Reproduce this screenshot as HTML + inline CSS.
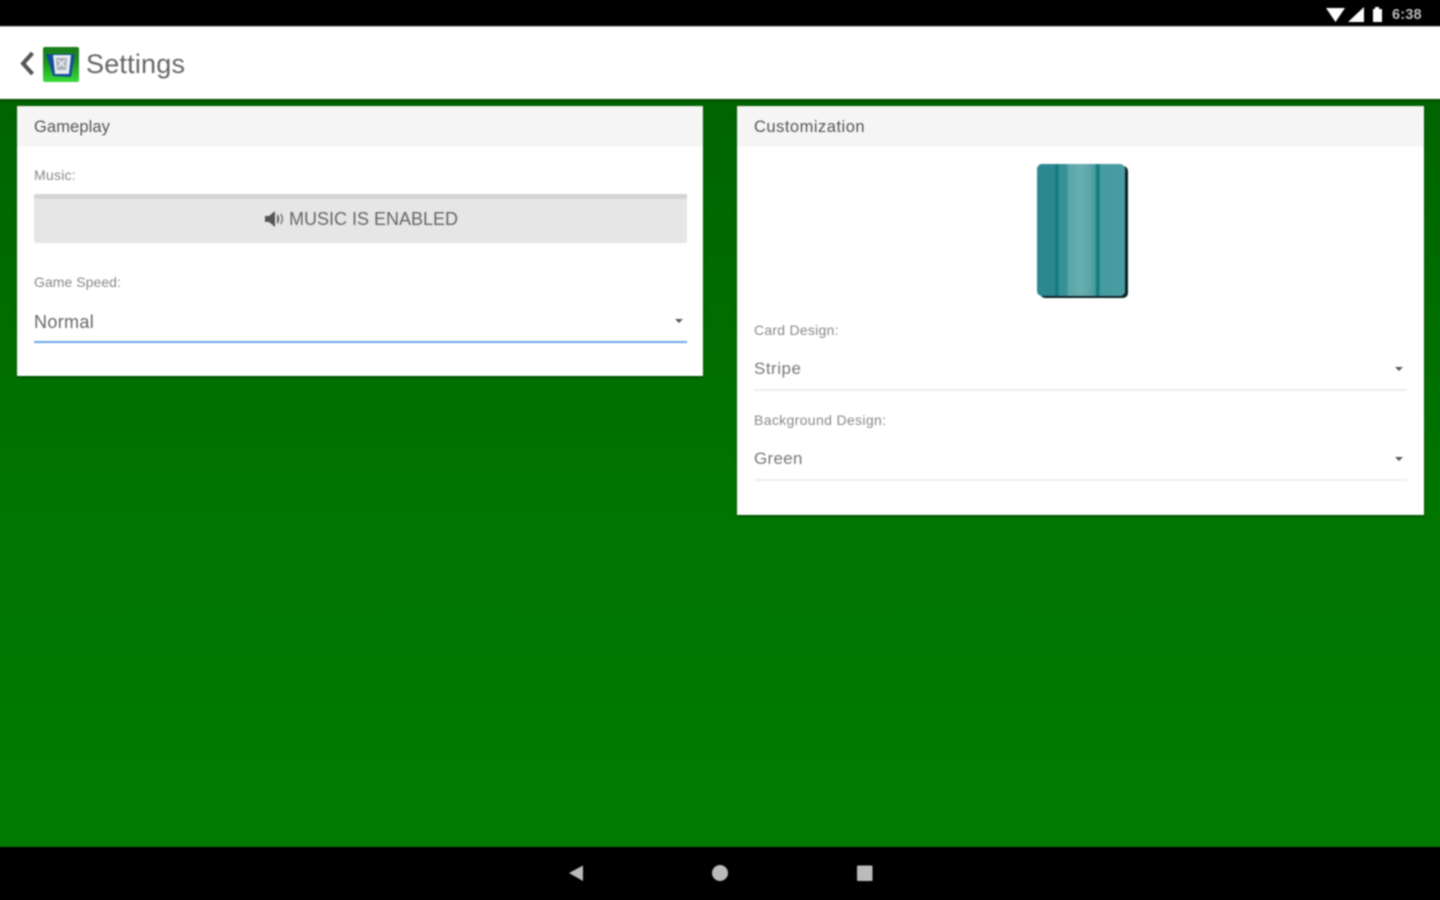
<!DOCTYPE html>
<html>
<head>
<meta charset="utf-8">
<style>
html,body{margin:0;padding:0;width:1440px;height:900px;overflow:hidden;background:#000}
body{font-family:"Liberation Sans",sans-serif;position:relative}
.abs{position:absolute}
#wrap{position:absolute;left:0;top:0;width:1440px;height:900px;filter:blur(.85px)}
.green{left:-10px;top:99px;width:1460px;height:748px;background:linear-gradient(#006400 0,#006c00 200px,#007400 400px,#007b00 748px)}
.top{left:-10px;top:-10px;width:1460px;height:36px;background:#000}
.bot{left:-10px;top:847px;width:1460px;height:63px;background:#000}
.bar{left:-10px;top:26px;width:1460px;height:73px;background:#fff;box-shadow:0 1px 2px rgba(0,0,0,.45);border-top:1px solid #ccc;box-sizing:border-box}
.title{left:86px;top:48px;font-size:27px;line-height:32px;color:#666;letter-spacing:.2px}
.card{background:#fff;box-shadow:0 1px 2px rgba(0,0,0,.5)}
.head{left:0;top:0;right:0;height:40px;background:#f5f5f5;border-bottom:1px solid #f0f0f0;box-sizing:border-box}
.ht{font-size:16.500px;line-height:20px;color:#555;white-space:nowrap;letter-spacing:.35px}
.lb{font-size:14px;line-height:16px;color:#888;white-space:nowrap;letter-spacing:.25px}
.val{font-size:17px;line-height:20px;color:#777;white-space:nowrap;letter-spacing:.2px}
.line{height:2px;background:#eee}
.arrow{width:0;height:0;border-left:4px solid transparent;border-right:4px solid transparent;border-top:4px solid #555}
.btn{left:17px;top:88px;width:653px;height:49px;background:#e6e6e6;border-top:5px solid #d4d4d4;box-sizing:border-box;border-radius:2px}
.cardimg{left:1037px;top:164px;width:88px;height:132px;border-radius:5px;box-shadow:3px 2px 0 #0a2225;background:linear-gradient(90deg,#2b8890 0,#2b8890 20%,#157a80 21%,#157a80 24%,#359097 25%,#359097 33%,#5aa5a8 36%,#68aeb0 50%,#5aa5a8 60%,#459a9f 66%,#137a80 68%,#137a80 70%,#459a9f 72%,#4a9da2 100%)}
</style>
</head>
<body>
<div id="wrap">
<div class="abs top"></div>
<div class="abs green"></div>
<div class="abs bot"></div>
<div class="abs bar"></div>

<svg class="abs" style="left:1320px;top:4px" width="80" height="20" viewBox="0 0 80 20">
<path d="M6 4H25L15.500 18Z" fill="#fff"/>
<path d="M28 18L44 3V18Z" fill="#fff"/>
<path d="M53 5H55V3H59V5H62V18H53Z" fill="#fff"/>
</svg>
<div class="abs" style="left:1392px;top:7px;font-size:14.500px;line-height:16px;color:#bbb;font-weight:bold;letter-spacing:.2px">6:38</div>

<svg class="abs" style="left:18px;top:50px" width="20" height="28" viewBox="0 0 20 28">
<path d="M14.500 3L5 13.500L14.500 24" fill="none" stroke="#555" stroke-width="4"/>
</svg>
<svg class="abs" style="left:43px;top:46px" width="36" height="36" viewBox="0 0 36 36">
<defs><linearGradient id="g" x1="0" y1="0" x2="0" y2="1"><stop offset="0" stop-color="#187a18"/><stop offset=".4" stop-color="#1f8f1f"/><stop offset="1" stop-color="#38dc38"/></linearGradient></defs>
<rect y="1" width="36" height="35" rx="2" fill="url(#g)"/>
<path d="M3 8H32L28 31L10 30Z" fill="#0f4f96"/>
<path d="M10 9H28L26 28H12Z" fill="#e8ebf0"/>
<path d="M13 12H24L23 24H14Z" fill="#a8b0ba"/>
<path d="M15 14L22 21M22 14L15 21" stroke="#eef0f3" stroke-width="1.500"/>
</svg>
<div class="abs title">Settings</div>

<div class="abs card" style="left:17px;top:106px;width:686px;height:270px">
  <div class="abs head"></div>
  <div class="abs ht" style="left:17px;top:11px;letter-spacing:.1px">Gameplay</div>
  <div class="abs lb" style="left:17px;top:61px">Music:</div>
  <div class="abs btn"></div>
  <svg class="abs" style="left:248px;top:105px" width="20" height="16" viewBox="0 0 20 16">
    <path d="M0 5H4L10 0V16L4 11H0Z" fill="#555"/>
    <path d="M12 3C15 5 15 11 12 13Z" fill="#666"/>
    <path d="M15.500 3C18 6 18 10 15.500 13" fill="none" stroke="#777" stroke-width="1.500"/>
  </svg>
  <div class="abs" style="left:272px;top:102px;font-size:18px;line-height:22px;color:#666;white-space:nowrap">MUSIC IS ENABLED</div>
  <div class="abs lb" style="left:17px;top:168px;letter-spacing:.05px">Game Speed:</div>
  <div class="abs val" style="left:17px;top:206px;color:#666;font-size:18px;letter-spacing:.35px">Normal</div>
  <div class="abs arrow" style="left:658px;top:213px"></div>
  <div class="abs line" style="left:17px;top:235px;width:653px;background:#6ea4ee"></div>
</div>

<div class="abs card" style="left:737px;top:106px;width:687px;height:409px">
  <div class="abs head"></div>
  <div class="abs ht" style="left:17px;top:11px;letter-spacing:.5px">Customization</div>
  <div class="abs lb" style="left:17px;top:216px">Card Design:</div>
  <div class="abs val" style="left:17px;top:253px;letter-spacing:.5px">Stripe</div>
  <div class="abs arrow" style="left:658px;top:261px"></div>
  <div class="abs line" style="left:17px;top:283px;width:653px"></div>
  <div class="abs lb" style="left:17px;top:306px;letter-spacing:.35px">Background Design:</div>
  <div class="abs val" style="left:17px;top:343px;letter-spacing:.3px">Green</div>
  <div class="abs arrow" style="left:658px;top:351px"></div>
  <div class="abs line" style="left:17px;top:373px;width:653px"></div>
</div>
<div class="abs cardimg"></div>

<svg class="abs" style="left:560px;top:860px" width="320" height="26" viewBox="0 0 320 26">
  <path d="M9 13L23 5.500V21Z" fill="#bbb"/>
  <circle cx="160" cy="13" r="8" fill="#bbb"/>
  <rect x="297" y="5.500" width="15.500" height="15.500" rx="1" fill="#bbb"/>
</svg>
</div>
</body>
</html>
